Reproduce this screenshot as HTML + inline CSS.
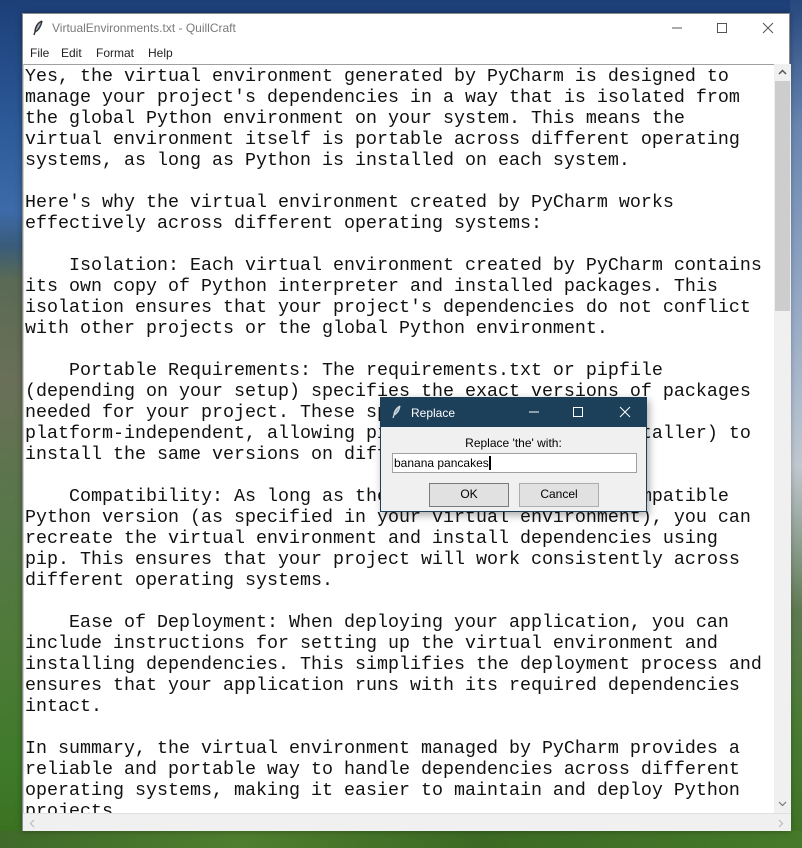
<!DOCTYPE html>
<html><head><meta charset="utf-8"><style>
*{margin:0;padding:0;box-sizing:border-box}
body{width:802px;height:848px;overflow:hidden;position:relative;font-family:"Liberation Sans",sans-serif;
background:linear-gradient(180deg,#1d3f78 0%,#2c5a98 15%,#3d6aa8 25%,#3a5c7a 29%,#5a6a55 33%,#6a7058 45%,#58764a 60%,#4f7a3a 75%,#3f7a2a 90%,#3a7020 100%)}
.rbg{position:absolute;left:790px;top:0;width:12px;height:848px;background:linear-gradient(180deg,#27487e 0%,#6a86b0 15%,#8aa0c0 30%,#a8b8cc 45%,#c0c8d0 55%,#9aa8a0 62%,#5e7a52 72%,#4a7a34 85%,#3e7224 100%)}
.bbg{position:absolute;left:0;top:831px;width:802px;height:17px;background:linear-gradient(90deg,#3f6a2a,#4e7e2e 30%,#3c6a24 60%,#467a2a)}
.win{position:absolute;left:22px;top:13px;width:768px;height:818px;background:#fff;border:1px solid #8a8a8a;box-shadow:0 0 6px rgba(0,0,0,.35)}
.title{position:absolute;left:0;top:0;width:766px;height:30px;background:#fff;font-size:12px;color:#7a7a7a}
.title .t{position:absolute;left:29px;top:7px}
.menu{position:absolute;left:0;top:30px;height:20px;font-size:12px;color:#222}
.menu span{position:absolute;top:2px}
.txt{position:absolute;left:0;top:50px;width:751px;height:749px;border-top:1px solid #a0a0a0;border-left:1px solid #d0d0d0;overflow:hidden}
pre{font-family:"Liberation Mono",monospace;font-size:18.33px;line-height:21px;color:#111;position:absolute;left:1px;top:1px;white-space:pre}
.vs{position:absolute;left:751px;top:50px;width:17px;height:749px;background:#f0f0f0}
.thumb{position:absolute;left:1px;top:17px;width:15px;height:230px;background:#cdcdcd}
.hs{position:absolute;left:0;top:799px;width:768px;height:18px;background:#f0f0f0;border-top:1px solid #e0e0e0}
.dlg{position:absolute;left:380px;top:397px;width:267px;height:115px;background:#f0f0f0;border:1px solid #1c3f5a;box-shadow:2px 3px 8px rgba(0,0,0,.35)}
.dt{height:29px;background:#1c3f5a;color:#fff;font-size:12px;position:relative}
.btn{position:absolute;top:85px;width:80px;height:24px;border:1px solid #adadad;background:#e1e1e1;font-size:12px;text-align:center;line-height:21px;color:#000}
</style></head><body>
<div class="rbg"></div><div class="bbg"></div>
<div class="win">
 <div class="title">
  <svg style="position:absolute;left:9px;top:6px" width="12" height="16" viewBox="0 0 12 16"><path d="M10 1 C5 3 3 8 3 12 L2 15 M3 12 C7 10 9 6 10 1" stroke="#333" stroke-width="1.4" fill="#9ab" /></svg>
  <span class="t">VirtualEnvironments.txt - QuillCraft</span>
  <svg style="position:absolute;left:640px;top:7px" width="120" height="14"><line x1="9" y1="7" x2="19" y2="7" stroke="#555"/><rect x="54.5" y="2.5" width="9" height="9" fill="none" stroke="#555"/><path d="M100 2 L110 12 M110 2 L100 12" stroke="#555"/></svg>
 </div>
 <div class="menu"><span style="left:7px">File</span><span style="left:38px">Edit</span><span style="left:73px">Format</span><span style="left:125px">Help</span></div>
 <div class="txt"><pre>Yes, the virtual environment generated by PyCharm is designed to
manage your project's dependencies in a way that is isolated from
the global Python environment on your system. This means the
virtual environment itself is portable across different operating
systems, as long as Python is installed on each system.

Here's why the virtual environment created by PyCharm works
effectively across different operating systems:

    Isolation: Each virtual environment created by PyCharm contains
its own copy of Python interpreter and installed packages. This
isolation ensures that your project's dependencies do not conflict
with other projects or the global Python environment.

    Portable Requirements: The requirements.txt or pipfile
(depending on your setup) specifies the exact versions of packages
needed for your project. These specifications are
platform-independent, allowing pip (Python's package installer) to
install the same versions on different systems.

    Compatibility: As long as the target system has a compatible
Python version (as specified in your virtual environment), you can
recreate the virtual environment and install dependencies using
pip. This ensures that your project will work consistently across
different operating systems.

    Ease of Deployment: When deploying your application, you can
include instructions for setting up the virtual environment and
installing dependencies. This simplifies the deployment process and
ensures that your application runs with its required dependencies
intact.

In summary, the virtual environment managed by PyCharm provides a
reliable and portable way to handle dependencies across different
operating systems, making it easier to maintain and deploy Python
projects.</pre></div>
 <div class="vs"><svg style="position:absolute;left:4px;top:5px" width="9" height="6"><path d="M1 5 L4.5 1.5 L8 5" stroke="#555" stroke-width="1.5" fill="none"/></svg><div class="thumb"></div><svg style="position:absolute;left:4px;top:737px" width="9" height="6"><path d="M1 1 L4.5 4.5 L8 1" stroke="#777" stroke-width="1.2" fill="none"/></svg></div>
 <div class="hs"><svg style="position:absolute;left:6px;top:5px" width="6" height="9"><path d="M5 1 L1.5 4.5 L5 8" stroke="#bbb" stroke-width="1.2" fill="none"/></svg><svg style="position:absolute;left:755px;top:5px" width="6" height="9"><path d="M1 1 L4.5 4.5 L1 8" stroke="#bbb" stroke-width="1.2" fill="none"/></svg></div>
</div>
<div class="dlg">
 <div class="dt">
  <svg style="position:absolute;left:11px;top:7px" width="10" height="14" viewBox="0 0 10 14"><path d="M8 1 C4 3 2 7 2 10 L1 13 M2 10 C6 8 7 5 8 1" stroke="#ddd" stroke-width="1.2" fill="#8ab"/></svg>
  <span style="position:absolute;left:30px;top:8px">Replace</span>
  <svg style="position:absolute;left:140px;top:7px" width="120" height="14"><line x1="8" y1="7" x2="18" y2="7" stroke="#fff"/><rect x="52.5" y="2.5" width="9" height="9" fill="none" stroke="#fff"/><path d="M99 2 L109 12 M109 2 L99 12" stroke="#fff"/></svg>
 </div>
 <div style="position:absolute;left:0;width:265px;top:38px;text-align:center;font-size:12px;color:#000">Replace 'the' with:</div>
 <div style="position:absolute;left:11px;top:55px;width:245px;height:20px;background:#fff;border:1px solid #a0a0a0;font-size:12px;padding:2px 1px;color:#000">banana pancakes<span style="display:inline-block;width:2px;height:14px;background:#000;vertical-align:-3px"></span></div>
 <div class="btn" style="left:48px;border:1px solid #7a7a7a">OK</div>
 <div class="btn" style="left:138px">Cancel</div>
</div>
</body></html>
